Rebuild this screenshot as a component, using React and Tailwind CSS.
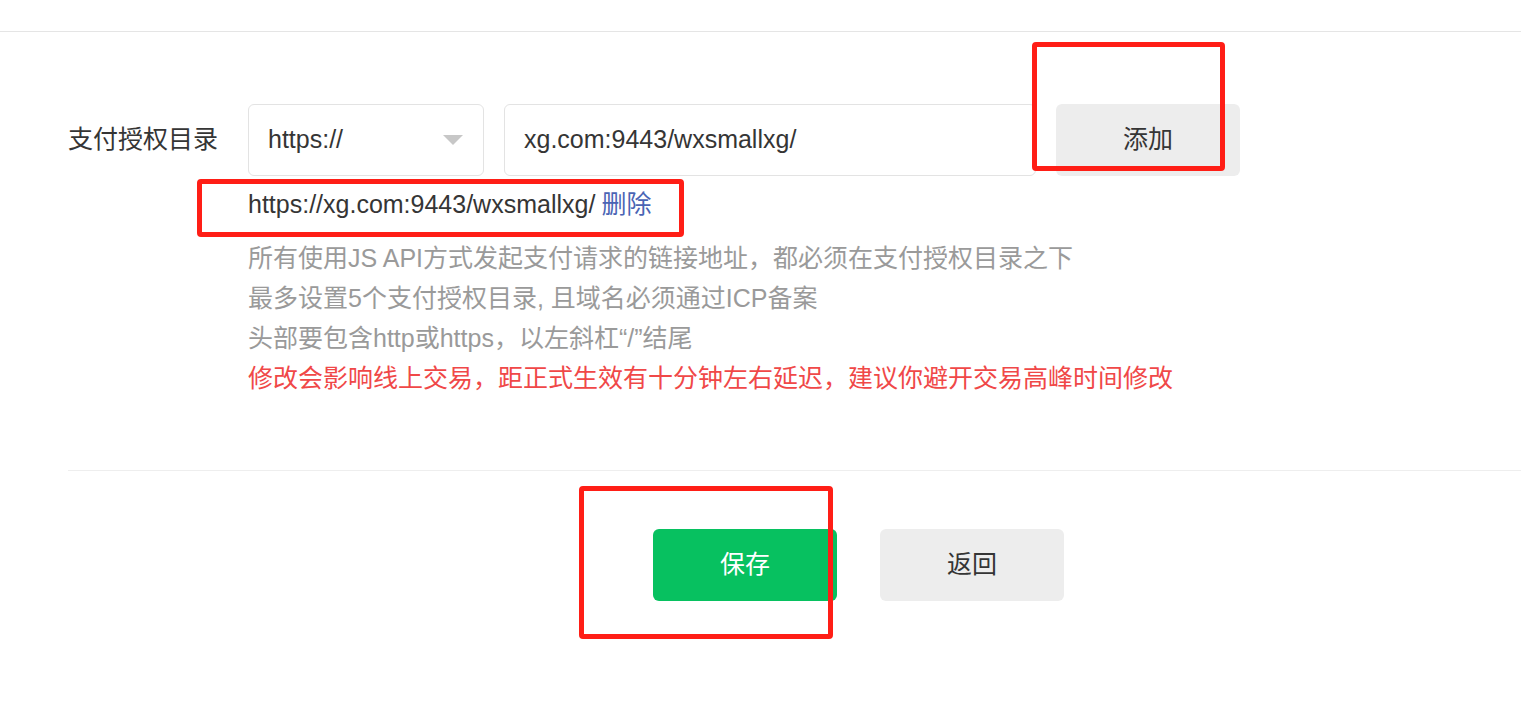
import React from 'react';

const font = { fontFamily: '"Liberation Sans", "Noto Sans CJK SC", sans-serif' };

export default function App() {
  return (
    <div className="relative w-[1521px] h-[727px] bg-white overflow-hidden text-[#353535]" style={font}>
      <div className="h-[32px] border-b border-[#e5e5e5]" />

      {/* 表单 */}
      <div className="flex mt-[72px] pl-[68px]">
        <div className="w-[180px] h-[72px] flex items-center text-[25px]">支付授权目录</div>
        <div>
          <div className="flex gap-[20px]">
            <div className="w-[236px] h-[72px] border border-[#e3e3e3] rounded-[6px] flex items-center justify-between pl-[19px] pr-[20px] text-[25px]">
              <span>https://</span>
              <svg width="20" height="10" viewBox="0 0 20 10">
                <path d="M0 0 L20 0 L10 10 Z" fill="#c7c7c7" />
              </svg>
            </div>
            <div className="w-[532px] h-[72px] border border-[#e3e3e3] rounded-[6px] flex items-center pl-[19px] text-[25px]">
              xg.com:9443/wxsmallxg/
            </div>
            <div className="w-[184px] h-[72px] bg-[#ededed] rounded-[6px] flex items-center justify-center text-[25px]">
              添加
            </div>
          </div>
          <div className="mt-[9px] h-[40px] flex items-center text-[25px]">
            <span>https://xg.com:9443/wxsmallxg/</span>
            <span className="ml-[6px] text-[#4a64b4]">删除</span>
          </div>
          <div className="mt-[13px] text-[25px] leading-[40px] text-[#9a9a9a]">
            <p>所有使用JS API方式发起支付请求的链接地址，都必须在支付授权目录之下</p>
            <p>最多设置5个支付授权目录, 且域名必须通过ICP备案</p>
            <p>头部要包含http或https，以左斜杠“/”结尾</p>
            <p className="text-[#f04848]">修改会影响线上交易，距正式生效有十分钟左右延迟，建议你避开交易高峰时间修改</p>
          </div>
        </div>
      </div>

      <div className="ml-[68px] mt-[72px] border-t border-[#eeeeee]" />

      <div className="flex gap-[43px] ml-[653px] mt-[58px]">
        <div className="w-[184px] h-[72px] bg-[#07c160] rounded-[6px] flex items-center justify-center text-white text-[25px]">
          保存
        </div>
        <div className="w-[184px] h-[72px] bg-[#ededed] rounded-[6px] flex items-center justify-center text-[25px]">
          返回
        </div>
      </div>

      {/* 标注框 */}
      <div className="absolute left-[1032px] top-[42px] w-[193px] h-[129px] border-[5px] border-[#ff1e16] rounded-[4px]" />
      <div className="absolute left-[197px] top-[179px] w-[487px] h-[58px] border-[5px] border-[#ff1e16] rounded-[4px]" />
      <div className="absolute left-[579px] top-[486px] w-[254px] h-[153px] border-[5px] border-[#ff1e16] rounded-[4px]" />
    </div>
  );
}
